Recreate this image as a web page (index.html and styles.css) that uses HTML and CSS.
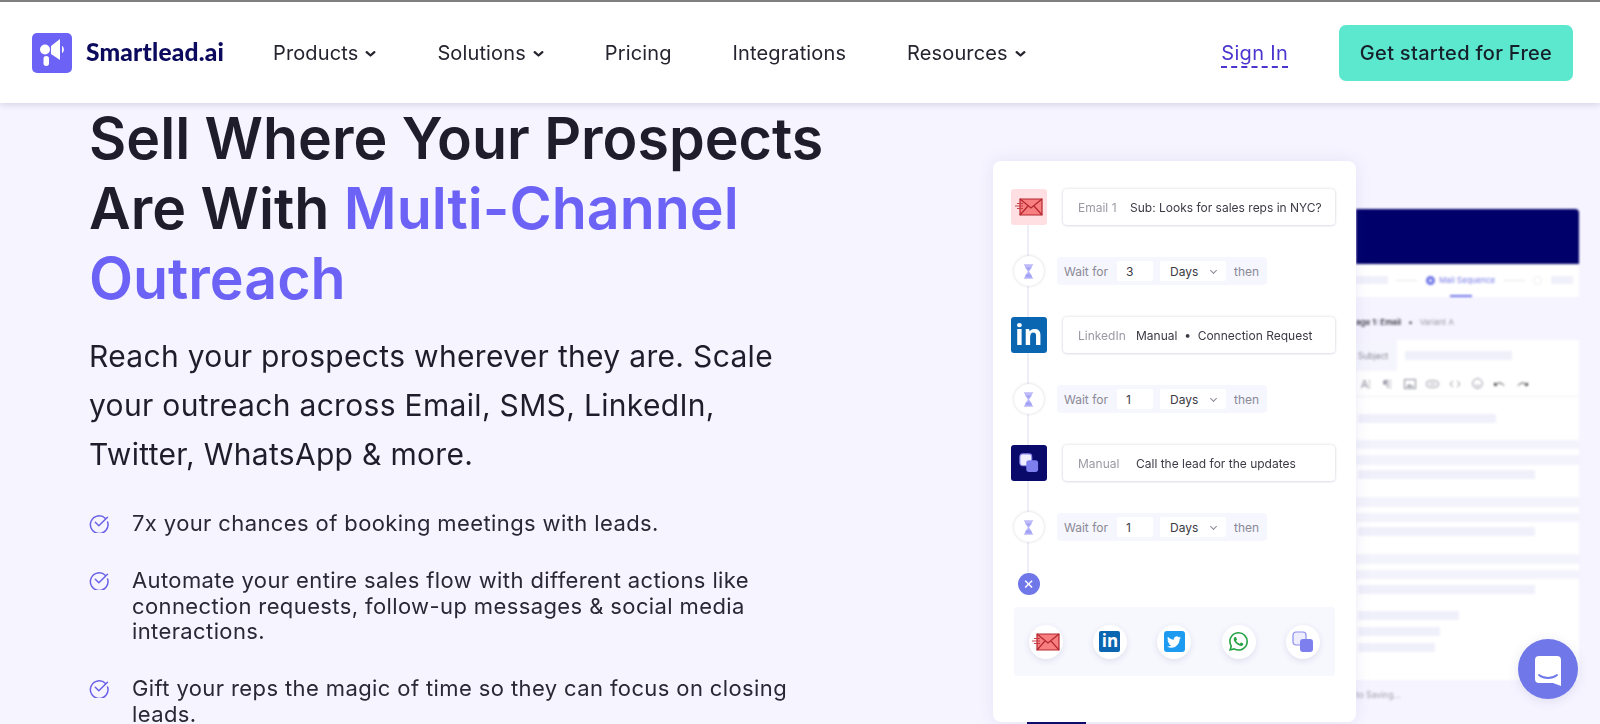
FILE: index.html
```html
<!DOCTYPE html>
<html lang="en">
<head>
<meta charset="utf-8">
<title>Smartlead.ai</title>
<link rel="stylesheet" href="styles.css">
</head>
<body>
<svg class="defs" width="0" height="0" aria-hidden="true">
  <defs>
    <symbol id="hourglass" viewBox="0 0 12 18">
      <path d="M1 1h10v1.500H10C10 6 7 7.500 6.800 9 7 10.500 10 12 10 15.500h1V17H1v-1.500h1C2 12 5 10.500 5.200 9 5 7.500 2 6 2 2.500H1z" fill="#bdbaf9"/>
      <path d="M3 14c1-1.500 2-2 3-3 1 1 2 1.500 3 3l.5 1.500h-7zM3.500 4.500h5C8 6 7 7 6 8 5 7 4 6 3.500 4.500z" fill="#a3a1f5"/>
    </symbol>
    <symbol id="mail" viewBox="0 0 28 20">
      <path d="M5 2h22v16H5z" fill="#f77f80" stroke="#b3262e" stroke-width="1.200"/>
      <path d="M5 2l11 9 11-9M5 18l8-9M27 18l-8-9" fill="none" stroke="#b3262e" stroke-width="1.200"/>
      <path d="M0 9h8M2 6.500h6M2 11.500h6" stroke="#c8414a" stroke-width="1"/>
    </symbol>
    <symbol id="copies" viewBox="0 0 22 22">
      <rect x="1" y="1" width="13" height="13" rx="3" fill="#eeeeff" stroke="#8c8cf0" stroke-width="1.200"/>
      <rect x="8" y="8" width="13" height="13" rx="3" fill="#7d7fee"/>
    </symbol>
    <symbol id="check" viewBox="0 0 20 20">
      <path d="M16.500 5.500A8.800 8.800 0 1 0 18.600 9" fill="none" stroke="#6b62e8" stroke-width="1.500" stroke-linecap="round"/>
      <path d="M6.300 9.300l3.500 3.500 8.700-8.500" fill="none" stroke="#6b62e8" stroke-width="1.500" stroke-linecap="round" stroke-linejoin="round"/>
    </symbol>
    <symbol id="chev" viewBox="0 0 10 6">
      <path d="M1.200 1.200l3.800 3.300 3.800-3.300" fill="none" stroke="currentColor" stroke-width="2.300" stroke-linecap="round" stroke-linejoin="round"/>
    </symbol>
  </defs>
</svg>

<header class="nav">
  <a class="brand" href="#">
    <span class="brand-mark">
      <svg viewBox="0 0 40 40" width="40" height="40">
        <rect width="40" height="40" rx="5" fill="#6c63f6"/>
        <path d="M19 13l9-7v21l-9-6z" fill="#fff"/>
        <circle cx="13" cy="16.500" r="5" fill="#fff"/>
        <path d="M30 13c2.500 1 2.500 6 0 7z" fill="#fff"/>
        <rect x="11.500" y="23" width="5.500" height="10" rx="2.700" fill="#fff"/>
      </svg>
    </span>
    <span class="brand-name">Smartlead.ai</span>
  </a>
  <nav class="menu">
    <a href="#">Products <svg class="chev"><use href="#chev"/></svg></a>
    <a href="#">Solutions <svg class="chev"><use href="#chev"/></svg></a>
    <a href="#">Pricing</a>
    <a href="#">Integrations</a>
    <a href="#">Resources <svg class="chev"><use href="#chev"/></svg></a>
  </nav>
  <a class="signin" href="#">Sign In</a>
  <a class="cta" href="#">Get started for Free</a>
</header>

<main class="hero">
  <section class="copy">
    <h1>Sell Where Your Prospects Are With <em>Multi-Channel Outreach</em></h1>
    <p class="lead">Reach your prospects wherever they are. Scale your outreach across Email, SMS, LinkedIn, Twitter, WhatsApp &amp; more.</p>
    <ul class="points">
      <li><svg class="tick"><use href="#check"/></svg><span>7x your chances of booking meetings with leads.</span></li>
      <li><svg class="tick"><use href="#check"/></svg><span>Automate your entire sales flow with different actions like connection requests, follow-up messages &amp; social media interactions.</span></li>
      <li><svg class="tick"><use href="#check"/></svg><span>Gift your reps the magic of time so they can focus on closing leads.</span></li>
    </ul>
  </section>

  <div class="seq-col">
    <section class="seq">
      <span class="rail"></span>
      <div class="step">
        <span class="badge badge-mail"><svg width="28" height="20"><use href="#mail"/></svg></span>
        <div class="field"><span class="label label-a">Email 1</span><span>Sub: Looks for sales reps in NYC?</span></div>
      </div>
      <div class="wait">
        <span class="glass"><svg width="11" height="17"><use href="#hourglass"/></svg></span>
        <div class="wait-pill"><span>Wait for</span><b class="num">3</b><b class="days">Days <i class="mini"></i></b><span>then</span></div>
      </div>
      <div class="step">
        <span class="badge badge-in">in</span>
        <div class="field"><span class="label label-b">LinkedIn</span><span>Manual &nbsp;•&nbsp; Connection Request</span></div>
      </div>
      <div class="wait">
        <span class="glass"><svg width="11" height="17"><use href="#hourglass"/></svg></span>
        <div class="wait-pill"><span>Wait for</span><b class="num">1</b><b class="days">Days <i class="mini"></i></b><span>then</span></div>
      </div>
      <div class="step">
        <span class="badge badge-manual"><svg width="20" height="20"><use href="#copies"/></svg></span>
        <div class="field"><span class="label label-b">Manual</span><span>Call the lead for the updates</span></div>
      </div>
      <div class="wait">
        <span class="glass"><svg width="11" height="17"><use href="#hourglass"/></svg></span>
        <div class="wait-pill"><span>Wait for</span><b class="num">1</b><b class="days">Days <i class="mini"></i></b><span>then</span></div>
      </div>
      <div class="close-row"><span class="close">×</span></div>
      <div class="channels">
        <span class="chan"><svg width="28" height="20"><use href="#mail"/></svg></span>
        <span class="chan"><span class="mini-in">in</span></span>
        <span class="chan"><span class="mini-tw"><svg viewBox="0 0 24 24" width="14" height="14"><path fill="#fff" d="M23.953 4.570a10 10 0 01-2.825.775 4.958 4.958 0 002.163-2.723c-.951.555-2.005.959-3.127 1.184a4.920 4.920 0 00-8.384 4.482C7.690 8.095 4.067 6.130 1.640 3.162a4.822 4.822 0 00-.666 2.475c0 1.710.870 3.213 2.188 4.096a4.904 4.904 0 01-2.228-.616v.060a4.923 4.923 0 003.946 4.827 4.996 4.996 0 01-2.212.085 4.936 4.936 0 004.604 3.417 9.867 9.867 0 01-6.102 2.105c-.390 0-.779-.023-1.170-.067a13.995 13.995 0 007.557 2.209c9.053 0 13.998-7.496 13.998-13.985 0-.210 0-.420-.015-.630A9.935 9.935 0 0024 4.590z"/></svg></span></span>
        <span class="chan"><svg viewBox="0 0 24 24" width="19" height="19"><path fill="#25a244" d="M17.472 14.382c-.297-.149-1.758-.867-2.030-.967-.273-.099-.471-.148-.670.150-.197.297-.767.966-.940 1.164-.173.199-.347.223-.644.075-.297-.150-1.255-.463-2.390-1.475-.883-.788-1.480-1.761-1.653-2.059-.173-.297-.018-.458.130-.606.134-.133.298-.347.446-.520.149-.174.198-.298.298-.497.099-.198.050-.371-.025-.520-.075-.149-.669-1.612-.916-2.207-.242-.579-.487-.500-.669-.510-.173-.008-.371-.010-.570-.010-.198 0-.520.074-.792.372-.272.297-1.040 1.016-1.040 2.479 0 1.462 1.065 2.875 1.213 3.074.149.198 2.096 3.200 5.077 4.487.709.306 1.262.489 1.694.625.712.227 1.360.195 1.871.118.571-.085 1.758-.719 2.006-1.413.248-.694.248-1.289.173-1.413-.074-.124-.272-.198-.570-.347"/><path fill="#25a244" d="M20.464 3.488A11.815 11.815 0 0012.050 0C5.495 0 .160 5.335.157 11.892c0 2.096.547 4.142 1.588 5.945L.057 24l6.305-1.654a11.882 11.882 0 005.683 1.448h.005c6.554 0 11.890-5.335 11.893-11.893a11.821 11.821 0 00-3.480-8.413zm-8.413 18.297h-.004a9.870 9.870 0 01-5.031-1.378l-.361-.214-3.741.982.998-3.648-.235-.374a9.860 9.860 0 01-1.510-5.260c.001-5.450 4.436-9.884 9.888-9.884 2.640 0 5.122 1.030 6.988 2.898a9.825 9.825 0 012.893 6.994c-.003 5.450-4.437 9.884-9.885 9.884z"/></svg></span>
        <span class="chan"><svg width="22" height="22"><use href="#copies"/></svg></span>
      </div>
    </section>
    <span class="peek"></span>
  </div>

  <section class="editor">
    <div class="ed-head"></div>
    <div class="ed-tabs">
      <span class="sk sk-tab"></span><span class="tab-line"></span>
      <span class="tab-dot"></span><span class="tab-name">Mail Sequence</span>
      <span class="tab-line"></span><span class="tab-ring"></span><span class="sk sk-tab2"></span>
      <span class="tab-under"></span>
    </div>
    <div class="ed-title"><b>age 1: Email</b><i>•</i><span>Variant A</span></div>
    <div class="ed-subject"><span class="subj-label">Subject</span><span class="subj-input"><span class="sk sk-subj"></span></span></div>
    <div class="ed-tools">
      <span>A⁝</span><span>¶⁝</span>
      <svg viewBox="0 0 12 10" width="12" height="10"><rect x=".5" y=".5" width="11" height="9" fill="none" stroke="#8e8e9e"/><path d="M2 8l3-3 2 2 1-1 2 2z" fill="#8e8e9e"/></svg>
      <svg viewBox="0 0 14 8" width="13" height="8"><rect x=".5" y=".5" width="13" height="7" rx="3.500" fill="none" stroke="#8e8e9e"/><path d="M4 4h6" stroke="#8e8e9e"/></svg>
      <svg viewBox="0 0 12 8" width="12" height="8"><path d="M4 1L1 4l3 3M8 1l3 3-3 3" fill="none" stroke="#8e8e9e"/></svg>
      <svg viewBox="0 0 12 12" width="11" height="11"><circle cx="6" cy="6" r="5.300" fill="none" stroke="#8e8e9e"/><path d="M3.500 7.500c1.500 1.500 3.500 1.500 5 0" fill="none" stroke="#8e8e9e"/></svg>
      <svg viewBox="0 0 12 6" width="11" height="6"><path d="M1 4c3-3 7-3 10 1" fill="none" stroke="#333"/><path d="M0 1v4h4z" fill="#333"/></svg>
      <svg viewBox="0 0 12 6" width="11" height="6"><path d="M11 4C8 1 4 1 1 5" fill="none" stroke="#333"/><path d="M12 1v4H8z" fill="#333"/></svg>
    </div>
    <div class="ed-body">
      <div class="block b1"><span class="sk w138"></span></div>
      <div class="band"></div>
      <div class="block b3"></div>
      <div class="band band-tall"></div>
      <div class="block b2"><span class="sk w177"></span></div>
      <div class="band band-tall"></div>
      <div class="block b3"></div>
      <div class="band"></div>
      <div class="block b2"><span class="sk w177"></span></div>
      <div class="band band-tall"></div>
      <div class="block b3"></div>
      <div class="band"></div>
      <div class="block b5">
        <span class="sk w177"></span>
        <span class="sk w101 gap"></span>
        <span class="sk w82"></span>
        <span class="sk w77"></span>
      </div>
    </div>
    <div class="ed-foot">to Saving...</div>
  </section>
</main>

<button class="chat" aria-label="Chat">
  <svg viewBox="0 0 28 32" width="28" height="32">
    <path d="M5 1h18a4 4 0 0 1 4 4v26l-8-3H5a4 4 0 0 1-4-4V5a4 4 0 0 1 4-4z" fill="#fff"/>
    <path d="M5 20c5 4 13 4 18 0" fill="none" stroke="#7077e8" stroke-width="1.800" stroke-linecap="round"/>
  </svg>
</button>
</body>
</html>
```

FILE: styles.css
```css
* { box-sizing: border-box; }
html, body { margin: 0; height: 724px; overflow: hidden; }
body { font-family: Inter, "Liberation Sans", sans-serif; background: #f6f4ff; color: #1f1d2b; }
a { text-decoration: none; color: inherit; }
.defs { display: block; height: 0; }

.nav {
  height: 103px;
  border-top: 2px solid #808080;
  background: #fff;
  box-shadow: 0 2px 6px rgba(60, 50, 110, .16);
  display: flex;
  align-items: center;
  padding: 0 27px 0 32px;
  position: relative;
  z-index: 2;
}
.brand { display: flex; align-items: center; gap: 14px; width: 241px; filter: blur(.3px); }
.brand-mark { display: block; width: 40px; height: 40px; }
.brand-name { font: 900 24.500px/1 Lato, sans-serif; color: #0c0a5c; letter-spacing: .2px; }
.menu { display: flex; gap: 61px; font-size: 20px; letter-spacing: .13px; color: #26242f; flex: 1; filter: blur(.3px); }
.menu a { display: flex; align-items: center; gap: 7px; white-space: nowrap; }
.chev { width: 11px; height: 6px; margin-top: 3px; }
.signin {
  font-size: 20px;
  color: #4a35cf;
  border-bottom: 2px dashed #4a35cf;
  padding-bottom: 1px;
  margin: 3px 51px 0 0;
  letter-spacing: .3px;
  filter: blur(.3px);
}
.cta {
  width: 234px;
  height: 56px;
  border-radius: 7px;
  background: #5ce8cf;
  display: flex;
  align-items: center;
  justify-content: center;
  font-size: 20px;
  font-weight: 500;
  letter-spacing: .3px;
  color: #16202a;
  filter: blur(.3px);
}

.hero { display: grid; grid-template-columns: 993px 363px 223px; height: 621px; overflow: hidden; }
.copy { padding-left: 89px; filter: blur(.35px); }
h1 { margin: 0; width: 780px; font-size: 57.300px; line-height: 70px; font-weight: 600; color: #1f1d2b; }
h1 em { font-style: normal; color: #6c63f6; }
.lead { margin: 19px 0 0; width: 700px; font-size: 30px; line-height: 49px; letter-spacing: .32px; color: #1f1d2b; }
.points { list-style: none; margin: 32px 0 0; padding: 0; width: 720px; font-size: 22px; letter-spacing: .39px; line-height: 25.500px; display: flex; flex-direction: column; gap: 31.500px; color: #2a2835; }
.points li { display: flex; gap: 23px; }
.points span { flex: 1; }
.tick { width: 20px; height: 20px; flex: none; margin-top: 2px; }

.seq-col { position: relative; z-index: 1; margin-top: 58px; display: flex; flex-direction: column; }
.seq {
  position: relative;
  height: 561px;
  background: #fff;
  border-radius: 8px;
  padding: 28px 21px 0 17.500px;
  box-shadow: 0 0 16px rgba(90, 80, 170, .1);
  display: flex;
  flex-direction: column;
  gap: 31px;
  font-size: 12px;
  color: #3b3a45;
  filter: blur(.4px);
}
.peek { display: block; width: 59px; height: 2px; margin-left: 34px; background: #0a0a6b; }
.rail { position: absolute; left: 34px; top: 64px; width: 2px; height: 350px; background: #eeeef8; }
.step { display: flex; gap: 16.500px; height: 36px; position: relative; }
.badge { width: 36px; height: 36px; border-radius: 3px; display: flex; align-items: center; justify-content: center; flex: none; }
.badge-mail { background: #ffdfe2; }
.badge-in { background: #0a66b0; color: #fff; font: 700 29px/36px "Open Sans", sans-serif; padding-bottom: 3px; letter-spacing: -.5px; }
.badge-manual { background: #0a0a6b; }
.field {
  flex: 1;
  display: flex;
  align-items: center;
  padding-left: 15px;
  background: #fff;
  border-radius: 4px;
  box-shadow: 0 0 3px rgba(40, 40, 90, .18), 0 1px 3px rgba(40, 40, 90, .08);
  white-space: nowrap;
}
.label { color: #9a9aa5; }
.label-a { width: 52px; }
.label-b { width: 58px; }
.wait { display: flex; align-items: center; height: 30px; position: relative; padding-left: 3px; gap: 13.500px; }
.glass { width: 30px; height: 30px; border-radius: 50%; background: #fff; box-shadow: 0 0 3px rgba(40, 40, 90, .2); display: flex; align-items: center; justify-content: center; flex: none; }
.wait-pill { width: 210px; height: 28px; background: #f6f6fe; border-radius: 4px; display: flex; align-items: center; padding-left: 7px; color: #8a8996; }
.num, .days { font-weight: 400; color: #3b3a45; background: #fff; height: 20px; display: flex; align-items: center; border-radius: 2px; }
.num { width: 36px; margin-left: 9px; padding-left: 9px; }
.days { width: 66px; margin: 0 8px 0 7px; padding-left: 10px; justify-content: flex-start; gap: 13px; }
.mini { display: block; width: 5px; height: 5px; border: solid #8a8996; border-width: 0 1px 1px 0; transform: rotate(45deg); margin-top: -2px; }
.close-row { height: 22px; margin-left: 7px; margin-bottom: -19px; position: relative; }
.close { display: block; width: 22px; height: 22px; border-radius: 50%; background: #7077e8; color: #fff; text-align: center; font-size: 17px; line-height: 21px; }
.channels { margin-left: 3px; height: 69px; background: #f7f7fe; display: flex; justify-content: space-between; align-items: center; padding: 0 15px 0 15px; border-radius: 3px; }
.chan { width: 34px; height: 34px; border-radius: 50%; background: #fff; box-shadow: 0 2px 6px rgba(60, 60, 120, .12); display: flex; align-items: center; justify-content: center; flex: none; }
.mini-in { width: 21px; height: 21px; background: #0a66b0; border-radius: 2px; color: #fff; font: 700 17px/20px "Open Sans", sans-serif; text-align: center; }
.mini-tw { width: 21px; height: 21px; background: #1d9bf0; border-radius: 3px; display: flex; align-items: center; justify-content: center; }

.editor { margin-top: 106px; height: 515px; display: flex; flex-direction: column; filter: blur(1px); color: #3b3a45; }
.ed-head { height: 55px; background: #00006b; border-radius: 0 4px 0 0; flex: none; }
.ed-tabs { height: 33px; background: #fff; display: flex; align-items: center; position: relative; font-size: 8px; flex: none; padding-bottom: 1px; }
.sk { display: block; background: #f0f0fb; height: 9px; border-radius: 1px; }
.sk-tab { width: 32px; height: 8px; }
.sk-tab2 { width: 22px; height: 8px; margin-left: 9px; }
.tab-line { width: 21px; height: 1px; background: #e6e6f0; margin: 0 8px; }
.tab-dot { width: 9px; height: 9px; border-radius: 50%; border: 3px solid #7077e8; background: #fff; margin: 0 4px 0 1px; flex: none; }
.tab-name { color: #7d80ea; white-space: nowrap; width: 57px; }
.tab-ring { width: 9px; height: 9px; border: 1px solid #eee; border-radius: 50%; }
.tab-under { position: absolute; left: 94px; bottom: 0; width: 22px; height: 2px; background: #7077e8; }
.ed-title { height: 43px; display: flex; align-items: center; font-size: 8px; white-space: nowrap; flex: none; padding-top: 6px; }
.ed-title b { font-weight: 600; }
.ed-title i { margin: 0 7px; font-style: normal; }
.ed-title span { color: #9a9aa5; }
.ed-subject { height: 31px; display: flex; flex: none; }
.subj-label { width: 41px; background: #f5f5fe; color: #8a8996; font-size: 8.500px; padding: 11px 0 0 2px; }
.subj-input { flex: 1; background: #fff; padding: 11px 0 0 8px; }
.sk-subj { width: 107px; }
.ed-tools { height: 26px; background: #fff; border-bottom: 1px solid #f0f0f5; display: grid; grid-template-columns: 20px repeat(7, 22.500px); align-items: center; justify-items: center; font-size: 11px; color: #8e8e9e; flex: none; }
.ed-body { height: 283px; display: flex; flex-direction: column; flex: none; }
.block { background: #fff; padding: 0 2px; flex: none; }
.band { height: 9px; background: #f3f3fc; flex: none; }
.band-tall { height: 10px; }
.b1 { height: 43px; padding-top: 17px; }
.b2 { height: 32px; padding-top: 5px; }
.b3 { height: 6px; }
.b5 { height: 101px; padding-top: 6px; display: flex; flex-direction: column; gap: 7px; }
.w138 { width: 138px; }
.w177 { width: 177px; }
.w101 { width: 101px; }
.w82 { width: 82px; }
.w77 { width: 77px; }
.gap { margin-top: 10px; }
.ed-foot { font-size: 8.500px; color: #a0a0aa; padding-top: 10px; }

.chat {
  position: fixed;
  right: 22px;
  bottom: 25px;
  width: 60px;
  height: 60px;
  border: 0;
  padding: 3px 0 0;
  border-radius: 50%;
  background: #7077e8;
  box-shadow: 0 2px 12px rgba(60, 60, 120, .12);
  display: flex;
  align-items: center;
  justify-content: center;
  z-index: 3;
}
```
